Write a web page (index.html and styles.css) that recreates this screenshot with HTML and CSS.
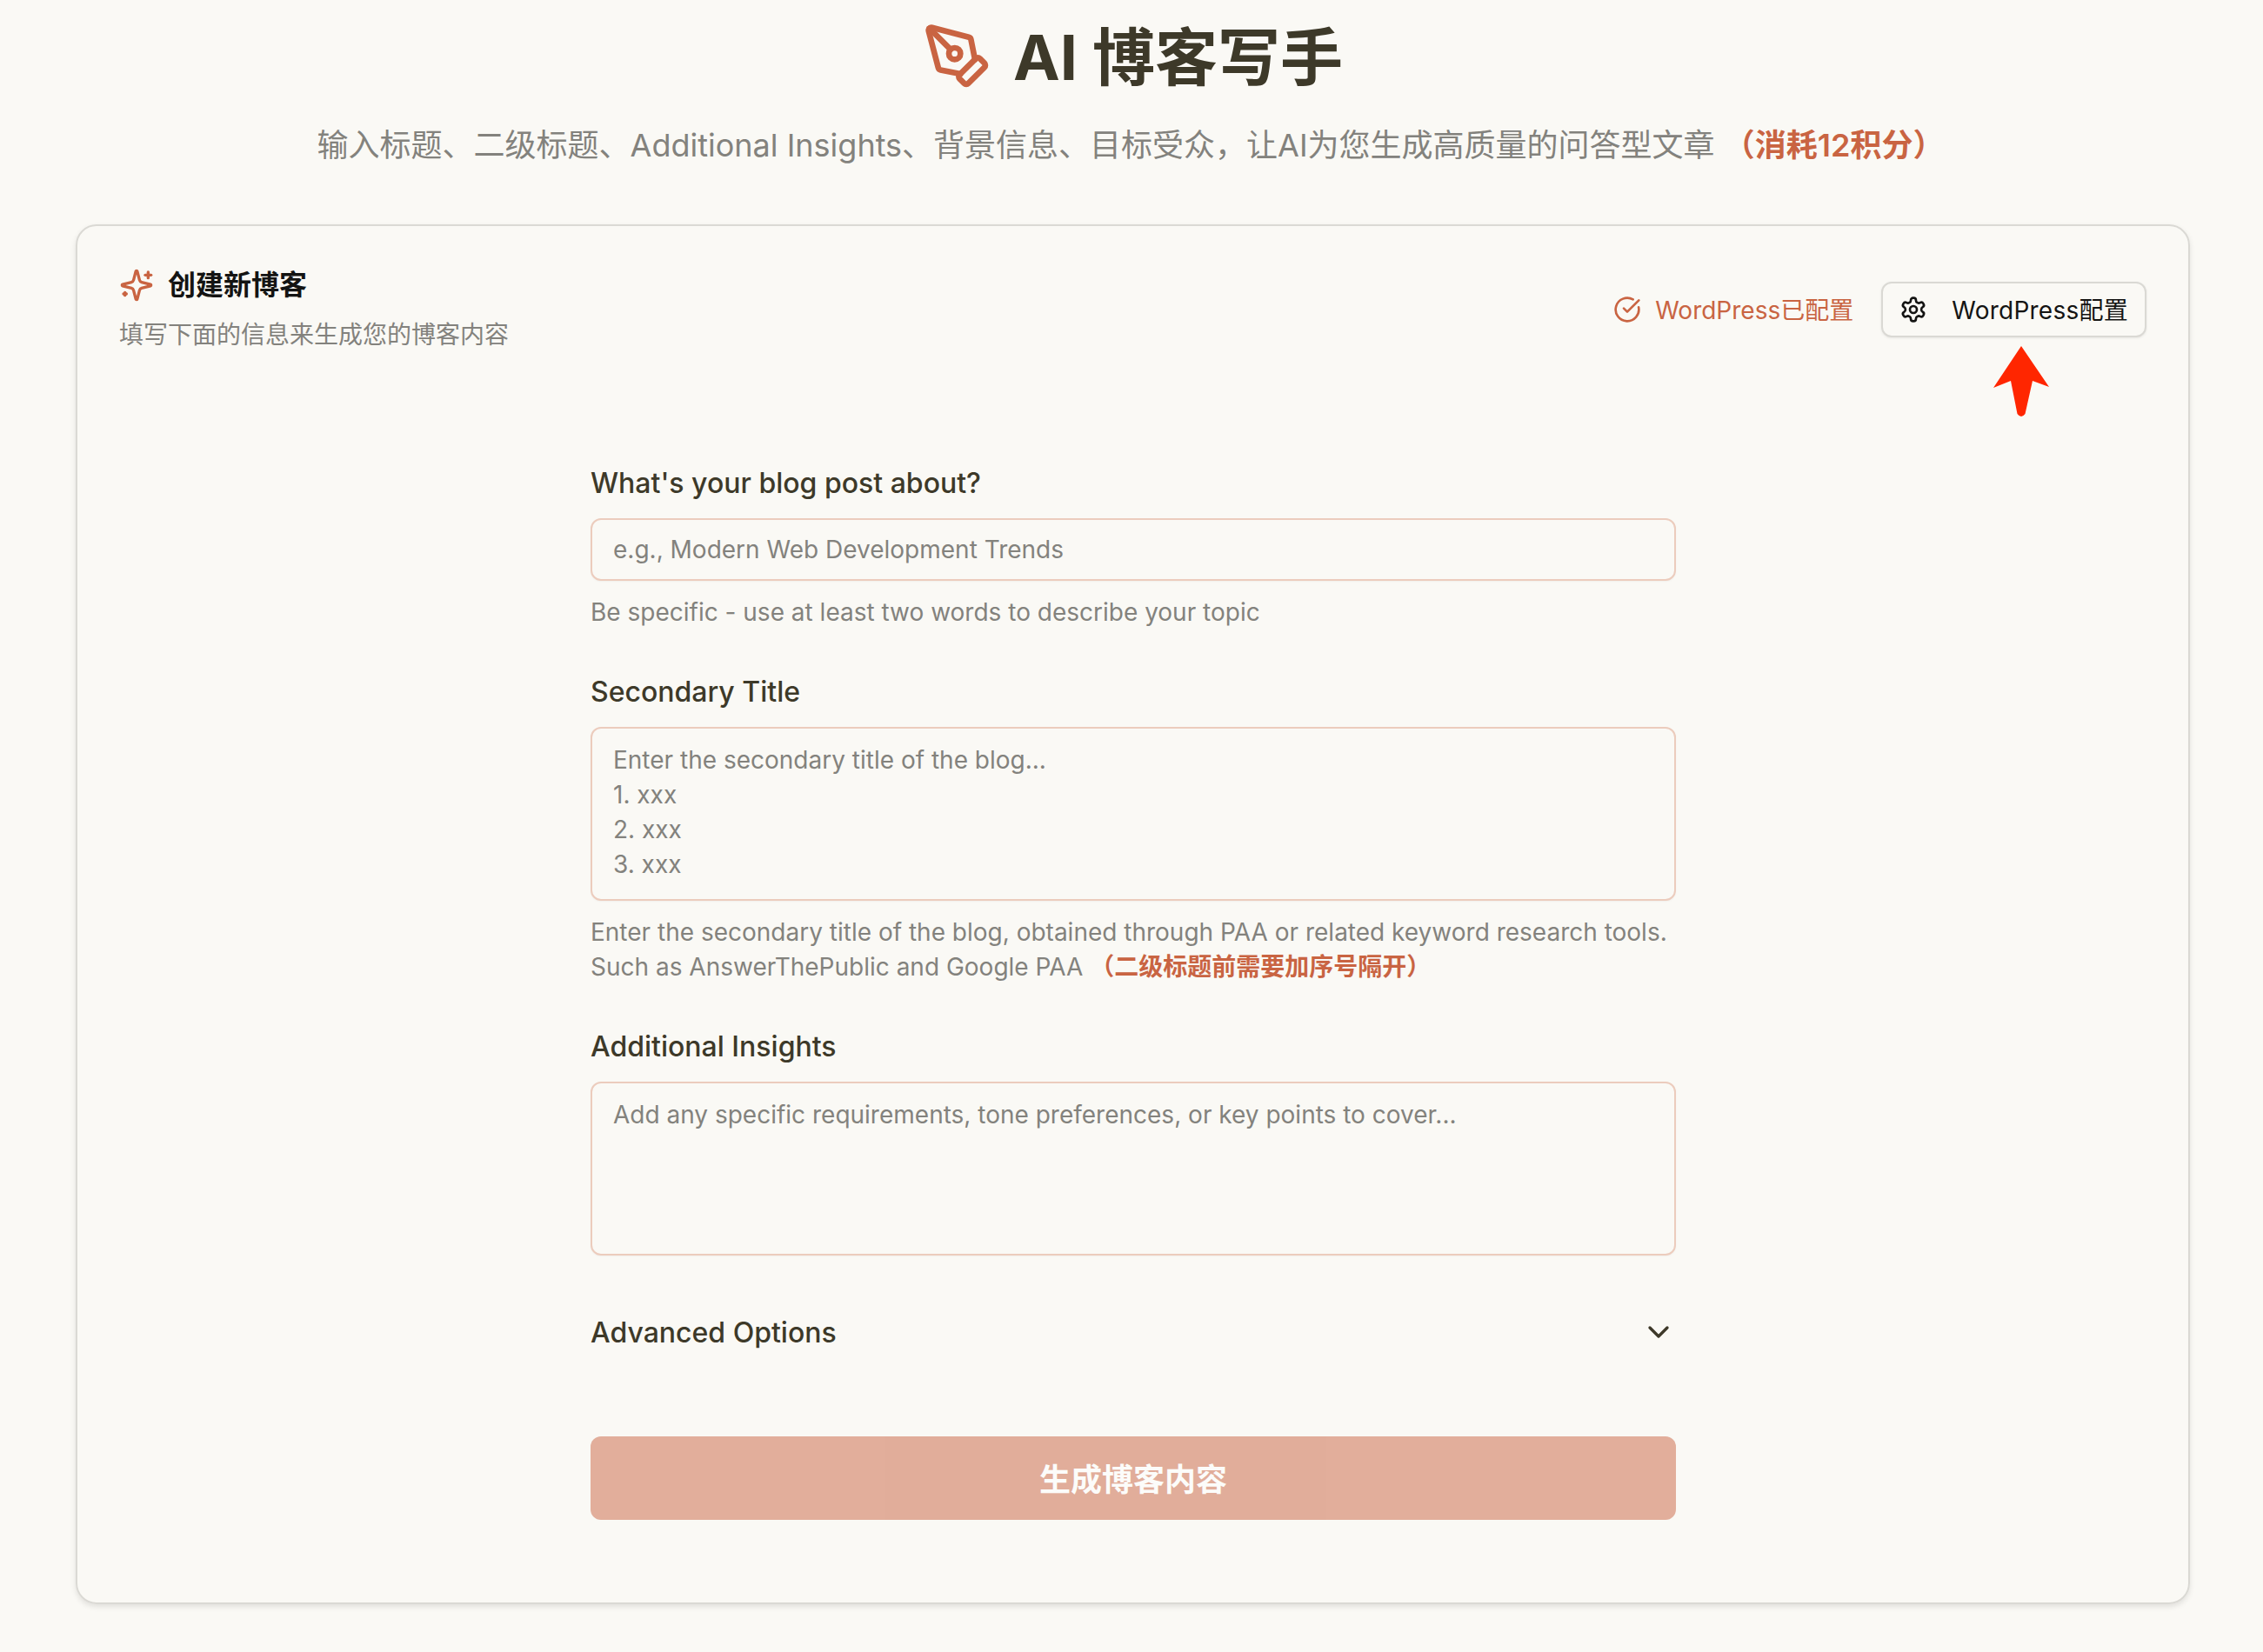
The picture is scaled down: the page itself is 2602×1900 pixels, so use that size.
FILE: index.html
```html
<!DOCTYPE html>
<html lang="zh-CN">
<head>
<meta charset="UTF-8">
<meta name="viewport" content="width=device-width, initial-scale=1.0">
<title>AI 博客写手</title>
<link rel="stylesheet" href="styles.css">
</head>
<body>
<header class="page-header">
  <div class="page-title">
    <svg class="logo-icon" viewBox="0 0 24 24"><path d="M15.707 21.293a1 1 0 0 1-1.414 0l-1.586-1.586a1 1 0 0 1 0-1.414l5.586-5.586a1 1 0 0 1 1.414 0l1.586 1.586a1 1 0 0 1 0 1.414z"/><path d="m18 13-1.375-6.874a1 1 0 0 0-.746-.776L3.235 2.028a1 1 0 0 0-1.207 1.207L5.35 15.879a1 1 0 0 0 .776.746L13 18"/><path d="m2.3 2.3 7.286 7.286"/><circle cx="11" cy="11" r="2"/></svg>
    <h1>AI 博客写手</h1>
  </div>
  <p class="page-sub">输入标题、二级标题、Additional Insights、背景信息、目标受众，让AI为您生成高质量的问答型文章 <strong class="accent">（消耗12积分）</strong></p>
</header>

<main class="card">
  <div class="card-head">
    <div>
      <div class="card-title">
        <svg class="sparkle-icon" viewBox="0 0 24 24"><path d="M9.937 15.5A2 2 0 0 0 8.5 14.063l-6.135-1.582a.5.5 0 0 1 0-.962L8.5 9.936A2 2 0 0 0 9.937 8.5l1.582-6.135a.5.5 0 0 1 .963 0L14.063 8.5A2 2 0 0 0 15.5 9.937l6.135 1.581a.5.5 0 0 1 0 .964L15.5 14.063a2 2 0 0 0-1.437 1.437l-1.582 6.135a.5.5 0 0 1-.963 0z"/><path d="M20 3v4"/><path d="M22 5h-4"/><path d="M4 17v2"/><path d="M5 18H3"/></svg>
        <h2>创建新博客</h2>
      </div>
      <p class="card-sub">填写下面的信息来生成您的博客内容</p>
    </div>
    <div class="wp-actions">
      <span class="wp-status">
        <svg class="small-icon" viewBox="0 0 24 24"><path d="M21.801 10A10 10 0 1 1 17 3.335"/><path d="m9 11 3 3L22 4"/></svg>
        <span class="wp-text">WordPress已配置</span>
      </span>
      <button class="wp-button" type="button">
        <svg class="small-icon" viewBox="0 0 24 24"><path d="M12.22 2h-.44a2 2 0 0 0-2 2v.18a2 2 0 0 1-1 1.73l-.43.25a2 2 0 0 1-2 0l-.15-.08a2 2 0 0 0-2.73.73l-.22.38a2 2 0 0 0 .73 2.73l.15.1a2 2 0 0 1 1 1.72v.51a2 2 0 0 1-1 1.74l-.15.09a2 2 0 0 0-.73 2.73l.22.38a2 2 0 0 0 2.73.73l.15-.08a2 2 0 0 1 2 0l.43.25a2 2 0 0 1 1 1.73V20a2 2 0 0 0 2 2h.44a2 2 0 0 0 2-2v-.18a2 2 0 0 1 1-1.73l.43-.25a2 2 0 0 1 2 0l.15.08a2 2 0 0 0 2.73-.73l.22-.39a2 2 0 0 0-.73-2.73l-.15-.08a2 2 0 0 1-1-1.74v-.5a2 2 0 0 1 1-1.74l.15-.09a2 2 0 0 0 .73-2.73l-.22-.38a2 2 0 0 0-2.73-.73l-.15.08a2 2 0 0 1-2 0l-.43-.25a2 2 0 0 1-1-1.73V4a2 2 0 0 0-2-2z"/><circle cx="12" cy="12" r="3"/></svg>
        <span class="wp-text wp-button-text">WordPress配置</span>
      </button>
      <svg class="red-arrow" viewBox="0 0 64 82"><path d="M32 0 L64 47 L45 40 L36.500 78 Q32 84 27.500 78 L20 40 L0 48 Z"/></svg>
    </div>
  </div>

  <form class="blog-form">
    <div class="field">
      <label for="topic">What's your blog post about?</label>
      <input id="topic" type="text" placeholder="e.g., Modern Web Development Trends">
      <p class="help">Be specific - use at least two words to describe your topic</p>
    </div>
    <div class="field">
      <label for="secondary">Secondary Title</label>
      <textarea id="secondary" placeholder="Enter the secondary title of the blog...&#10;1. xxx&#10;2. xxx&#10;3. xxx"></textarea>
      <p class="help">Enter the secondary title of the blog, obtained through PAA or related keyword research tools.<br>Such as AnswerThePublic and Google PAA <strong class="accent">（二级标题前需要加序号隔开）</strong></p>
    </div>
    <div class="field">
      <label for="insights">Additional Insights</label>
      <textarea id="insights" placeholder="Add any specific requirements, tone preferences, or key points to cover..."></textarea>
    </div>
    <div class="advanced">
      <span>Advanced Options</span>
      <svg class="chevron" viewBox="0 0 24 24"><path d="m6 9 6 6 6-6"/></svg>
    </div>
    <button class="submit" type="button"><span class="submit-text">生成博客内容</span></button>
  </form>
</main>
</body>
</html>
```

FILE: styles.css
```css
* {
  box-sizing: border-box;
}

body {
  margin: 0;
  padding: 25px 84px 56px 87px;
  background-color: #faf9f5;
  color: #3d3929;
  font-family: Inter, "Noto Sans CJK SC", sans-serif;
}

svg {
  fill: none;
  stroke: currentColor;
  stroke-width: 2;
  stroke-linecap: round;
  stroke-linejoin: round;
  flex-shrink: 0;
}

p {
  margin: 0;
}

.accent {
  color: #c96442;
  font-weight: 600;
}

/* page header */
.page-header {
  text-align: center;
}

.page-title {
  display: flex;
  justify-content: center;
  align-items: center;
  gap: 24px;
  height: 80px;
}

.page-title h1 {
  margin: 0;
  padding-top: 2px;
  font-size: 72px;
  line-height: 80px;
  font-weight: 700;
}

.logo-icon {
  width: 80px;
  height: 80px;
  color: #c96442;
}

.page-sub {
  margin-top: 38px;
  padding-right: 5px;
  font-size: 36px;
  line-height: 48px;
  color: #83827d;
}

/* card */
.card {
  margin-top: 67px;
  padding: 48px;
  height: 1587px;
  border: 2px solid #dad9d4;
  border-radius: 24px;
  box-shadow: 0 3px 6px rgba(0, 0, 0, 0.1);
}

.card-head {
  display: flex;
  justify-content: space-between;
  align-items: center;
}

.card-title {
  display: flex;
  align-items: center;
  gap: 16px;
  height: 40px;
}

.card-title h2 {
  margin: 0;
  font-size: 32px;
  line-height: 40px;
  font-weight: 600;
  color: #141413;
}

.sparkle-icon {
  width: 40px;
  height: 40px;
  color: #c96442;
}

.card-sub {
  margin: 17px 0 -1px;
  font-size: 28px;
  line-height: 40px;
  color: #83827d;
}

.wp-actions {
  position: relative;
  display: flex;
  align-items: center;
  gap: 32px;
}

.wp-status {
  display: flex;
  align-items: center;
  gap: 16px;
  font-size: 28px;
  color: #c96442;
}

.small-icon {
  width: 32px;
  height: 32px;
}

.wp-text {
  margin-top: -3px;
}

.wp-button {
  display: flex;
  align-items: center;
  gap: 28px;
  height: 64px;
  padding: 0 19px;
  background-color: #faf9f5;
  border: 2px solid #dad9d4;
  border-radius: 12px;
  box-shadow: 0 1px 3px rgba(0, 0, 0, 0.08);
  font-family: inherit;
  font-size: 28px;
  color: #141413;
}

.wp-button-text {
  letter-spacing: 0.25px;
}

/* annotation over the screenshot */
.red-arrow {
  position: absolute;
  top: 74px;
  right: 112px;
  width: 64px;
  height: 82px;
  fill: #ff2600;
  stroke: none;
}

/* form */
.blog-form {
  width: 1248px;
  margin: 128px 0 0 542px;
}

.field {
  margin-bottom: 48px;
}

.field label {
  display: block;
  margin-bottom: 16px;
  font-size: 32px;
  line-height: 48px;
  font-weight: 500;
}

.field input,
.field textarea {
  display: block;
  width: 100%;
  padding: 0 24px;
  background-color: #faf9f5;
  border: 2px solid #ecccbd;
  border-radius: 12px;
  box-shadow: 0 1px 2px rgba(0, 0, 0, 0.04);
  font-family: inherit;
  font-size: 28px;
  color: #3d3929;
  outline: none;
}

.field input {
  height: 72px;
}

.field textarea {
  height: 200px;
  padding-top: 16px;
  padding-bottom: 16px;
  line-height: 40px;
  resize: none;
}

.field input::placeholder,
.field textarea::placeholder {
  color: #83827d;
  opacity: 1;
}

.help {
  margin-top: 16px;
  font-size: 28px;
  line-height: 40px;
  color: #83827d;
}

.advanced {
  display: flex;
  justify-content: space-between;
  align-items: center;
  height: 48px;
  margin-top: 64px;
  font-size: 32px;
  font-weight: 500;
}

.chevron {
  width: 40px;
  height: 40px;
}

.submit {
  display: block;
  width: 100%;
  height: 96px;
  margin-top: 96px;
  padding-bottom: 3px;
  background-color: #c96442;
  border: none;
  border-radius: 12px;
  opacity: 0.5;
  font-family: inherit;
  font-size: 36px;
  font-weight: 600;
  color: #fff;
}
```
